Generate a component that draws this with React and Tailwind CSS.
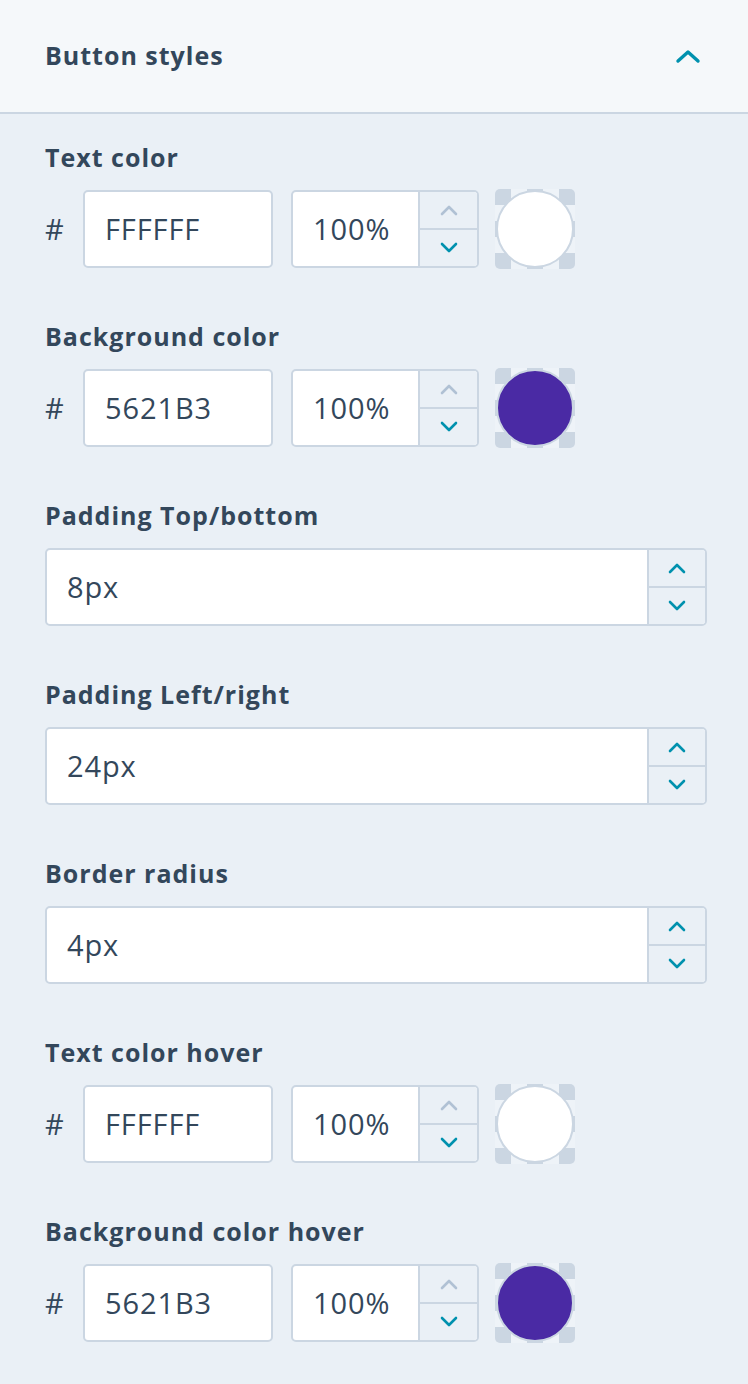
import React from 'react';

// Collapsible "Button styles" panel with color + number fields
const font = "font-['Open_Sans','Liberation_Sans',sans-serif]";

function Chevron({ up, muted, className = '' }) {
  return (
    <svg
      width="20"
      height="12"
      viewBox="0 0 20 12"
      fill="none"
      className={className}
    >
      <path
        d={up ? 'M3 10 L10 3 L17 10' : 'M3 2 L10 9 L17 2'}
        stroke={muted ? '#b0c1d4' : '#0091ae'}
        strokeWidth="2.6"
        strokeLinecap="round"
        strokeLinejoin="round"
      />
    </svg>
  );
}

function Stepper({ upMuted, width = 'w-[59px]' }) {
  return (
    <div className={`${width} shrink-0 flex flex-col border-l-2 border-[#cbd6e2] bg-[#eaf0f6]`}>
      <div className="flex-1 flex items-center justify-center border-b-2 border-[#cbd6e2]">
        <Chevron up muted={upMuted} />
      </div>
      <div className="flex-1 flex items-center justify-center">
        <Chevron />
      </div>
    </div>
  );
}

function Label({ children }) {
  return (
    <div className="h-[32px] leading-[32px] text-[25px] font-bold tracking-[1px] text-[#33475b]">
      {children}
    </div>
  );
}

const valueText = 'text-[29px] tracking-[0.9px] text-[#33475b]';

function ColorField({ label, hex, color }) {
  const white = color === '#ffffff';
  return (
    <div>
      <Label>{label}</Label>
      <div className="mt-[17px] flex items-center h-[78px]">
        <span className={`w-[38px] ${valueText}`}>#</span>
        <div className={`w-[190px] h-[78px] bg-white border-2 border-[#cbd6e2] rounded-[5px] flex items-center pl-[20px] ${valueText}`}>
          {hex}
        </div>
        <div className="ml-[18px] w-[188px] h-[78px] bg-white border-2 border-[#cbd6e2] rounded-[5px] flex overflow-hidden">
          <div className={`flex-1 flex items-center pl-[20px] ${valueText}`}>100%</div>
          <Stepper upMuted />
        </div>
        <div className="ml-[16px] shrink-0 w-[80px] h-[80px] rounded-[5px] p-[1px] bg-[repeating-conic-gradient(#eef3f8_0_25%,#cbd6e2_0_50%)] bg-[length:32px_32px]">
          <div
            className={`w-full h-full rounded-full border-2 border-[#cbd6e2] ${
              white ? 'bg-white' : 'bg-[#4a2aa4]'
            }`}
          />
        </div>
      </div>
    </div>
  );
}

function NumberField({ label, value }) {
  return (
    <div>
      <Label>{label}</Label>
      <div className="mt-[17px] h-[78px] bg-white border-2 border-[#cbd6e2] rounded-[5px] flex overflow-hidden">
        <div className={`flex-1 flex items-center pl-[20px] ${valueText}`}>{value}</div>
        <Stepper width="w-[58px]" />
      </div>
    </div>
  );
}

export default function App() {
  return (
    <div className={`w-[748px] min-h-[1384px] bg-[#eaf0f6] ${font}`}>
      {/* Panel header */}
      <div className="h-[114px] bg-[#f5f8fa] border-b-2 border-[#cbd6e2] flex items-center justify-between pl-[45px] pr-[47px]">
        <h2 className="text-[25px] font-bold tracking-[1px] text-[#33475b]">Button styles</h2>
        <svg width="26" height="16" viewBox="0 0 26 16" fill="none">
          <path d="M3 13 L13 4 L23 13" stroke="#0091ae" strokeWidth="3.4" strokeLinecap="round" strokeLinejoin="round" />
        </svg>
      </div>

      {/* Fields */}
      <div className="pl-[45px] pr-[41px] pt-[27px] flex flex-col gap-[52px]">
        <ColorField label="Text color" hex="FFFFFF" color="#ffffff" />
        <ColorField label="Background color" hex="5621B3" color="#5621b3" />
        <NumberField label="Padding Top/bottom" value="8px" />
        <NumberField label="Padding Left/right" value="24px" />
        <NumberField label="Border radius" value="4px" />
        <ColorField label="Text color hover" hex="FFFFFF" color="#ffffff" />
        <ColorField label="Background color hover" hex="5621B3" color="#5621b3" />
      </div>
    </div>
  );
}
